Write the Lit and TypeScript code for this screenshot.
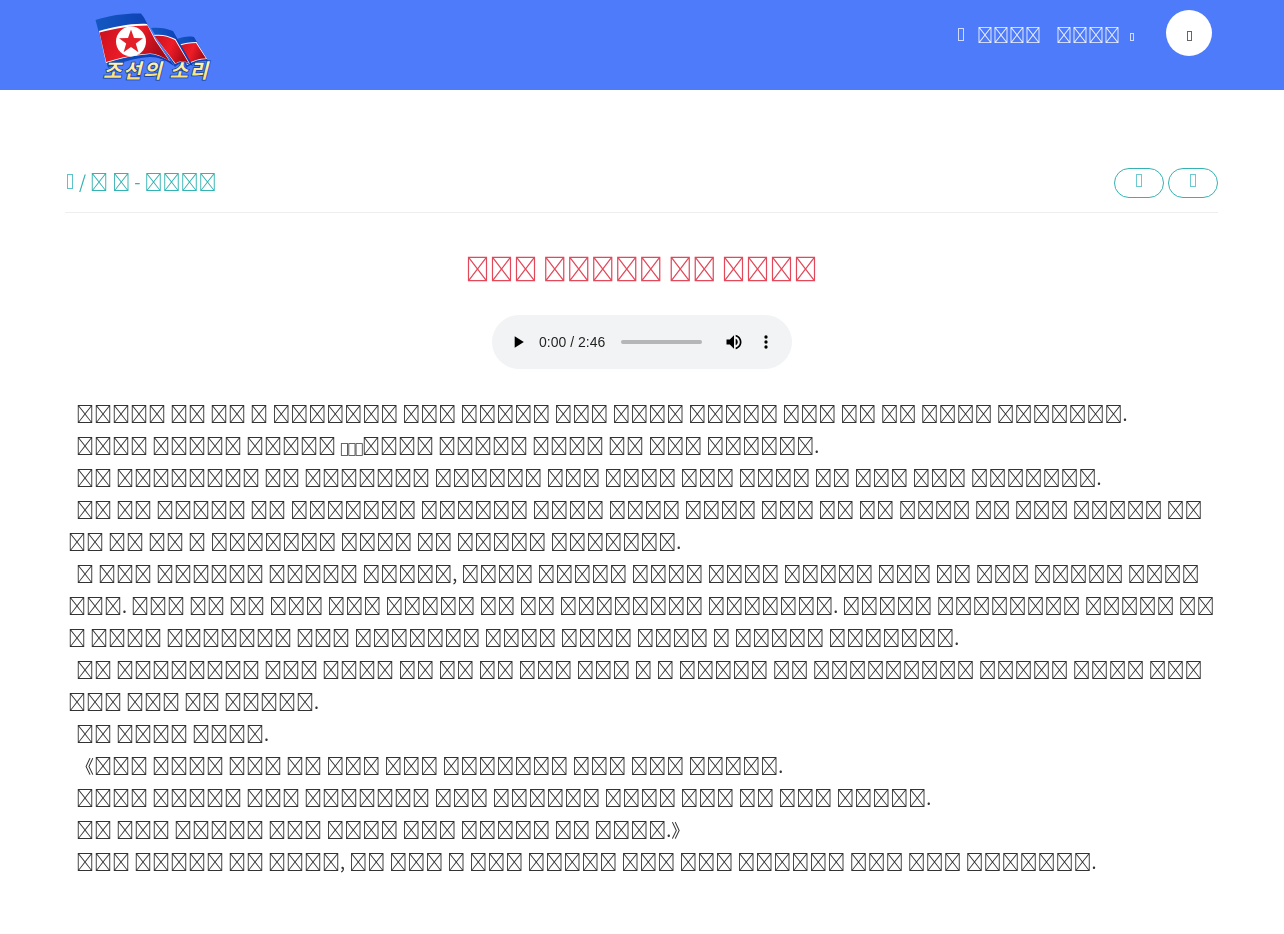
import {LitElement, html, css} from "lit";
import {customElement} from "lit/decorators.js";

// the reference shows only missing-glyph boxes, its hangul can't be read.
// U+E000 has no glyph, so it draws the same box. digits below = boxes per word
const BOX = "\uE000";
const w = (s: string) => s.replace(/\d+/g, n => BOX.repeat(+n));

const paragraphs = [
  "5 2 2 1 7 3 5 3 4 5 3 2 2 4 7.",
  null,
  "2 8 2 7 6 3 4 3 4 2 3 3 7.",
  "2 2 5 2 7 6 4 4 4 3 2 2 4 2 3 5 2 2 2 2 1 7 4 2 5 7.",
  "1 3 6 5 5, 4 5 4 4 5 3 2 3 5 4 3. 3 2 2 3 3 5 2 2 8 7. 5 8 5 2 1 4 7 3 7 4 4 4 1 5 7.",
  "2 8 3 4 2 2 2 3 3 1 1 5 2 9 5 4 3 3 3 2 5.",
  "2 4 4.",
  "《3 4 3 2 3 3 7 3 3 5.",
  "4 5 3 7 3 6 4 3 2 3 5.",
  "2 3 5 3 4 3 5 2 4.》",
  "3 5 2 4, 2 3 1 3 5 3 3 6 3 3 7.",
];

// silent wav so the native player has a real 2:46 duration
function silentWav(seconds: number) {
  const rate = 8000;
  const size = seconds * rate;
  const head = new DataView(new ArrayBuffer(44));
  const tag = (at: number, s: string) => [...s].forEach((c, i) => head.setUint8(at + i, c.charCodeAt(0)));
  tag(0, "RIFF");
  head.setUint32(4, 36 + size, true);
  tag(8, "WAVEfmt ");
  head.setUint32(16, 16, true);
  head.setUint16(20, 1, true);
  head.setUint16(22, 1, true);
  head.setUint32(24, rate, true);
  head.setUint32(28, rate, true);
  head.setUint16(32, 1, true);
  head.setUint16(34, 8, true);
  tag(36, "data");
  head.setUint32(40, size, true);
  return new Blob([head.buffer, new Uint8Array(size).fill(128)], {type: "audio/wav"});
}

const logo = html`
  <svg class="logo" viewBox="0 0 122 74" width="122" height="74">
    <defs>
      <linearGradient id="red" x1="0" y1="0" x2="1" y2="0.3">
        <stop offset="0" stop-color="#c8121f"/>
        <stop offset=".55" stop-color="#ee1c27"/>
        <stop offset="1" stop-color="#a80c18"/>
      </linearGradient>
      <linearGradient id="blue" x1="0" y1="0" x2="1" y2="0">
        <stop offset="0" stop-color="#1458c0"/>
        <stop offset="1" stop-color="#0a36b0"/>
      </linearGradient>
      <linearGradient id="gold" x1="0" y1="0" x2="0" y2="1">
        <stop offset="0" stop-color="#fffbd8"/>
        <stop offset="1" stop-color="#f8d860"/>
      </linearGradient>
    </defs>
    <path d="M87 29C92 27 98 26 104 27L118 51C110 50 103 53 96 58Z" fill="url(#blue)"/>
    <path d="M88 35C94 33 100 32 106.500 32L117 49C110 49 103 51 97 55Z" fill="#fff"/>
    <path d="M88.500 36C94 34 100 33 106 33L116 48.500C109 48.500 103 50.500 97 54Z" fill="url(#red)"/>
    <path d="M61 18C68 17 76 18 83 21L103 56C96 52 90 52 85 57Z" fill="url(#blue)"/>
    <path d="M64 25C70 24 78 25 85.500 29L100 54C95 51 90 51 85 54Z" fill="#fff"/>
    <path d="M64.500 26C71 25 78 26 85 30L99 53.500C95 50.500 90 50.500 85.500 53.500Z" fill="url(#red)"/>
    <path d="M5.500 10C20 5 38 3 51 3.500C55 8 58 15 61 23L84 56C76 50 68 47 60 47C46 48 30 52 18 58C14 42 10 26 5.500 10Z" fill="url(#blue)"/>
    <path d="M9 21C24 17 42 13 57 14L66 30L80 51C72 47 66 44 60 44C46 45 30 48 16 53Z" fill="#fff"/>
    <path d="M9.500 22.500C25 18.500 42 15.500 57.500 15.500L65 30L79.500 51C72 46.500 66 43.500 60 43.500C46 44.500 30 47.500 16.200 52Z" fill="url(#red)"/>
    <circle cx="41" cy="31.500" r="15" fill="#fff"/>
    <polygon points="41,19.500 44,28 53,28.200 45.800,33.600 48.400,42.200 41,37 33.600,42.200 36.200,33.600 29,28.200 38,28" fill="#e3202a"/>
    <text class="logo-text" x="13" y="68" textLength="105" fill="url(#gold)">조선의 소리</text>
  </svg>
`;

@customElement("app-root")
export class AppRoot extends LitElement {
  static styles = css`
    :host {
      display: block;
      font-family: "Noto Sans CJK KR", sans-serif;
      font-size: 18px;
      color: #333;
    }

    /* transparent layers: text gets grayscale antialiasing as in the reference */
    main, nav {
      will-change: transform;
    }

    header {
      height: 90px;
      background: #4e7bfa;
      display: flex;
      align-items: flex-start;
      justify-content: space-between;
      padding: 10px 72px 0 90px;
      box-sizing: border-box;
    }

    .logo {
      display: block;
    }

    .logo-text {
      font-size: 20px;
      font-weight: 700;
      font-style: italic;
      stroke: #123a8a;
      stroke-width: 1.500px;
      paint-order: stroke;
    }

    nav {
      display: flex;
      align-items: flex-start;
      color: #fff;
      font-size: 16px;
    }

    .nav-home {
      margin: 18px 13px 0 0;
      color: #cfdcff;
    }

    .nav-link {
      line-height: 48px;
      margin-right: 15px;
      opacity: .9;
    }

    .nav-link + .nav-link {
      margin-right: 10px;
    }

    .cart {
      margin: 23px 32px 0 0;
      color: #cfdcff;
    }

    .search {
      width: 46px;
      height: 46px;
      border-radius: 50%;
      background: #fff;
      display: flex;
      align-items: center;
      justify-content: center;
      color: #666;
    }

    .search .ico {
      margin-top: 6px;
    }

    /* icon font is missing in the reference, icons are hollow boxes */
    .ico {
      display: block;
      box-sizing: border-box;
      border: 1px solid currentColor;
      width: 6px;
      height: 13px;
    }

    .ico.tiny {
      width: 4px;
      height: 8px;
    }

    .ico.mid {
      width: 5px;
      height: 10px;
    }

    .ico.tall {
      width: 6px;
      height: 15px;
    }

    main {
      margin: 78px 66px 0 65px;
    }

    .crumbs {
      display: flex;
      justify-content: space-between;
      height: 44px;
      border-bottom: 1px solid #eee;
      color: #35b2b2;
    }

    .trail {
      display: flex;
      align-items: center;
      height: 26px;
      line-height: 26px;
      white-space: pre;
      padding-left: 2px;
    }

    .trail .ico {
      margin-right: 6px;
      color: #5cc3c9;
    }

    .pills {
      display: flex;
      gap: 4px;
    }

    .pill {
      width: 50px;
      height: 30px;
      border: 1px solid #35b2b2;
      border-radius: 15px;
      box-sizing: border-box;
      display: flex;
      justify-content: center;
      padding-top: 5px;
      color: #6ccbd0;
    }

    h1 {
      margin: 39px 0 0;
      font-size: 24px;
      font-weight: 400;
      line-height: 32px;
      text-align: center;
      color: #e2495a;
    }

    audio {
      display: block;
      width: 300px;
      height: 54px;
      margin: 31px auto 28px;
    }

    audio::-webkit-media-controls-current-time-display,
    audio::-webkit-media-controls-time-remaining-display {
      font-family: "Liberation Sans", sans-serif;
    }

    audio::-webkit-media-controls-timeline {
      opacity: .4;
    }

    .story {
      padding-left: 3px;
    }

    .story p {
      margin: 0;
      line-height: 32px;
      text-indent: 8px;
    }

    .small {
      font-family: "DejaVu Sans", sans-serif;
      font-size: 14px;
      line-height: 1;
      letter-spacing: -1.100px;
    }
  `;

  firstUpdated() {
    const player = this.renderRoot.querySelector("audio")!;
    player.src = URL.createObjectURL(silentWav(166));
  }

  render() {
    return html`
      <header>
        ${logo}
        <nav>
          <span class="ico nav-home"></span>
          <span class="nav-link">${w("4")}</span>
          <span class="nav-link">${w("4")}</span>
          <span class="ico tiny cart"></span>
          <span class="search"><span class="ico mid"></span></span>
        </nav>
      </header>
      <main>
        <div class="crumbs">
          <div class="trail"><span class="ico tall"></span>/ ${w("1")} ${w("1")} - ${w("4")}</div>
          <div class="pills">
            <span class="pill"><span class="ico"></span></span>
            <span class="pill"><span class="ico"></span></span>
          </div>
        </div>
        <h1>${w("3 5 2 4")}</h1>
        <audio controls preload="metadata"></audio>
        <div class="story">
          ${paragraphs.map(p => p
            ? html`<p>${w(p)}</p>`
            : html`<p>${w("4 5 5")} <span class="small">${w("3")}</span>${w("4 5 4 2 3 6.")}</p>`)}
        </div>
      </main>
    `;
  }
}
